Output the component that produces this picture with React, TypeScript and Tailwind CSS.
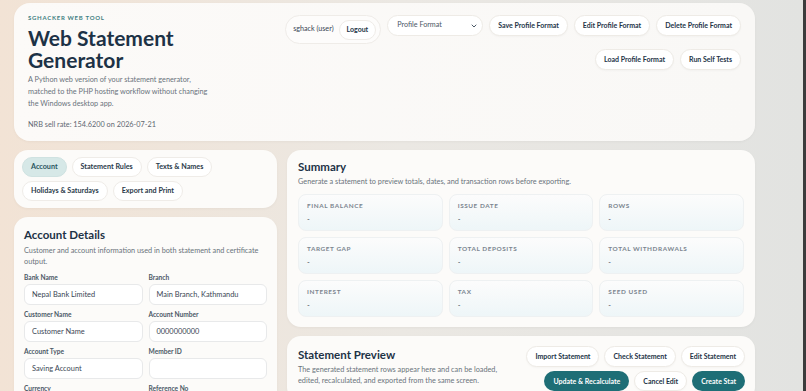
import { ChevronDown } from "lucide-react";

const font = { fontFamily: "Lato, 'Noto Sans', sans-serif" };

const pill =
  "h-[21px] rounded-full border border-[#eeebe6] bg-white px-[8px] text-[7px] font-bold leading-none text-[#243447] shadow-[0_1px_2px_rgba(0,0,0,0.03)]";
const teal = "h-[20px] rounded-full bg-[#1e6e76] px-[9px] text-[7px] font-bold leading-none text-white";

const tabs = [
  ["Account", "Statement Rules", "Texts & Names"],
  ["Holidays & Saturdays", "Export and Print"],
];

const fields = [
  ["Bank Name", "Nepal Bank Limited", "Branch", "Main Branch, Kathmandu"],
  ["Customer Name", "Customer Name", "Account Number", "0000000000"],
  ["Account Type", "Saving Account", "Member ID", ""],
  ["Currency", "", "Reference No", ""],
];

const stats = [
  "Final Balance",
  "Issue Date",
  "Rows",
  "Target Gap",
  "Total Deposits",
  "Total Withdrawals",
  "Interest",
  "Tax",
  "Seed Used",
];

function Field({ label, value }: { label: string; value: string }) {
  return (
    <div>
      <div className="text-[6.6px] font-bold leading-[8px] text-[#4b5866]">{label}</div>
      <div className="mt-[3px] flex h-[21px] items-center rounded-[6px] border border-[#e8e9ea] bg-white px-[7px] text-[7.4px] text-[#3a4654]">
        {value}
      </div>
    </div>
  );
}

export default function App() {
  return (
    <div
      className="flex h-screen overflow-hidden bg-gradient-to-r from-[#f2e3d5] via-[#ebe8e3] to-[#e2e3e1]"
      style={font}
    >
      <div className="flex-1 pl-[14px] pt-[3px]">
        <div className="w-[741px]">
          <header className="flex h-[138px] justify-between rounded-[16px] bg-gradient-to-r from-[#fcfaf8] to-[#f9f8f6] px-[14px] pt-[11px] shadow-[0_1px_3px_rgba(0,0,0,0.04)]">
            <div>
              <div className="text-[6px] font-bold uppercase leading-[8px] tracking-[0.12em] text-[#3e7f82]">
                sghacker web tool
              </div>
              <h1 className="mt-[5px] text-[21px] font-bold leading-[22px] text-[#1d3246]">
                Web Statement
                <br />
                Generator
              </h1>
              <p className="mt-[3px] w-[190px] text-[7.3px] leading-[12px] text-[#6a737c]">
                A Python web version of your statement generator, matched to the PHP hosting workflow without changing
                the Windows desktop app.
              </p>
              <p className="mt-[9px] text-[7.3px] leading-[12px] text-[#5f6872]">NRB sell rate: 154.6200 on 2026-07-21</p>
            </div>

            <div className="flex w-[470px] flex-col items-end gap-[5px] pt-[1px]">
              <div className="flex items-start gap-[6px]">
                <div className="flex h-[29px] items-center gap-[5px] rounded-full border border-[#efece8] bg-[#fdfcfb] pl-[7px] pr-[4px]">
                  <span className="text-[7.2px] text-[#3a4654]">sghack (user)</span>
                  <button className="h-[20px] rounded-full border border-[#efece8] bg-white px-[7px] text-[7px] font-bold leading-none text-[#243447]">
                    Logout
                  </button>
                </div>
                <div className="flex h-[21px] w-[96px] items-center justify-between rounded-full border border-[#eeebe6] bg-white pl-[9px] pr-[4px] text-[7.2px] text-[#4b5866]">
                  Profile Format
                  <ChevronDown className="h-[8px] w-[8px] text-[#4b5866]" strokeWidth={3} />
                </div>
                <button className={pill}>Save Profile Format</button>
                <button className={pill}>Edit Profile Format</button>
                <button className={pill}>Delete Profile Format</button>
              </div>
              <div className="flex gap-[6px]">
                <button className={pill}>Load Profile Format</button>
                <button className={pill}>Run Self Tests</button>
              </div>
            </div>
          </header>

          <div className="mt-[9px] grid grid-cols-[263px_1fr] gap-[10px]">
            <div className="flex flex-col gap-[9px]">
              <div className="flex flex-col gap-[4px] rounded-[14px] bg-[#fcfbf9] px-[8px] py-[7px] shadow-[0_1px_3px_rgba(0,0,0,0.04)]">
                {tabs.map((row, i) => (
                  <div key={i} className="flex gap-[5px]">
                    {row.map((t) =>
                      t === "Account" ? (
                        <button
                          key={t}
                          className="h-[20px] rounded-full border border-[#cfe2e1] bg-[#d6e8e7] px-[8px] text-[7.2px] font-bold leading-none text-[#2a5560]"
                        >
                          {t}
                        </button>
                      ) : (
                        <button
                          key={t}
                          className="h-[20px] rounded-full border border-[#efece8] bg-white px-[8px] text-[7.2px] font-bold leading-none text-[#2a3a4a]"
                        >
                          {t}
                        </button>
                      ),
                    )}
                  </div>
                ))}
              </div>

              <section className="rounded-[14px] bg-[#fcfbf9] px-[10px] pt-[11px] pb-[10px] shadow-[0_1px_3px_rgba(0,0,0,0.04)]">
                <h2 className="text-[11.5px] font-bold leading-[14px] text-[#1d3246]">Account Details</h2>
                <p className="mt-[3px] text-[7.3px] leading-[11px] text-[#6a737c]">
                  Customer and account information used in both statement and certificate output.
                </p>
                <div className="mt-[6px] grid grid-cols-2 gap-x-[6px] gap-y-[5px]">
                  {fields.map(([l1, v1, l2, v2]) => [
                    <Field key={l1} label={l1} value={v1} />,
                    <Field key={l2} label={l2} value={v2} />,
                  ])}
                </div>
              </section>
            </div>

            <div className="flex flex-col gap-[9px]">
              <section className="rounded-[14px] bg-[#fcfbf9] px-[11px] pt-[10px] pb-[10px] shadow-[0_1px_3px_rgba(0,0,0,0.04)]">
                <h2 className="text-[11.5px] font-bold leading-[14px] text-[#1d3246]">Summary</h2>
                <p className="mt-[2px] text-[7.3px] leading-[11px] text-[#6a737c]">
                  Generate a statement to preview totals, dates, and transaction rows before exporting.
                </p>
                <div className="mt-[7px] grid grid-cols-3 gap-[6px]">
                  {stats.map((s) => (
                    <div
                      key={s}
                      className="h-[37px] rounded-[8px] border border-[#eef1f2] bg-gradient-to-b from-[#fcfcfc] to-[#eef6f8] px-[8px] pt-[7px]"
                    >
                      <div className="text-[6.4px] font-bold uppercase leading-[8px] tracking-[0.09em] text-[#7b858f]">{s}</div>
                      <div className="mt-[5px] text-[7.4px] leading-[10px] text-[#3a4654]">-</div>
                    </div>
                  ))}
                </div>
              </section>

              <section className="flex justify-between rounded-[14px] bg-[#fcfbf9] pl-[11px] pr-[10px] pt-[10px] pb-[10px] shadow-[0_1px_3px_rgba(0,0,0,0.04)]">
                <div className="pt-[2px]">
                  <h2 className="text-[11.5px] font-bold leading-[14px] text-[#1d3246]">Statement Preview</h2>
                  <p className="mt-[2px] w-[210px] text-[7.3px] leading-[11px] text-[#6a737c]">
                    The generated statement rows appear here and can be loaded, edited, recalculated, and exported from the
                    same screen.
                  </p>
                </div>
                <div className="flex w-[236px] flex-wrap content-start justify-end gap-x-[5px] gap-y-[4px]">
                  <button className={pill}>Import Statement</button>
                  <button className={pill}>Check Statement</button>
                  <button className={pill}>Edit Statement</button>
                  <button className={teal}>Update &amp; Recalculate</button>
                  <button className={pill + " !h-[20px]"}>Cancel Edit</button>
                  <button className={teal}>Create Stat</button>
                </div>
              </section>
            </div>
          </div>
        </div>
      </div>
      <div className="w-[3px] bg-[#3b3c3c]" />
    </div>
  );
}
